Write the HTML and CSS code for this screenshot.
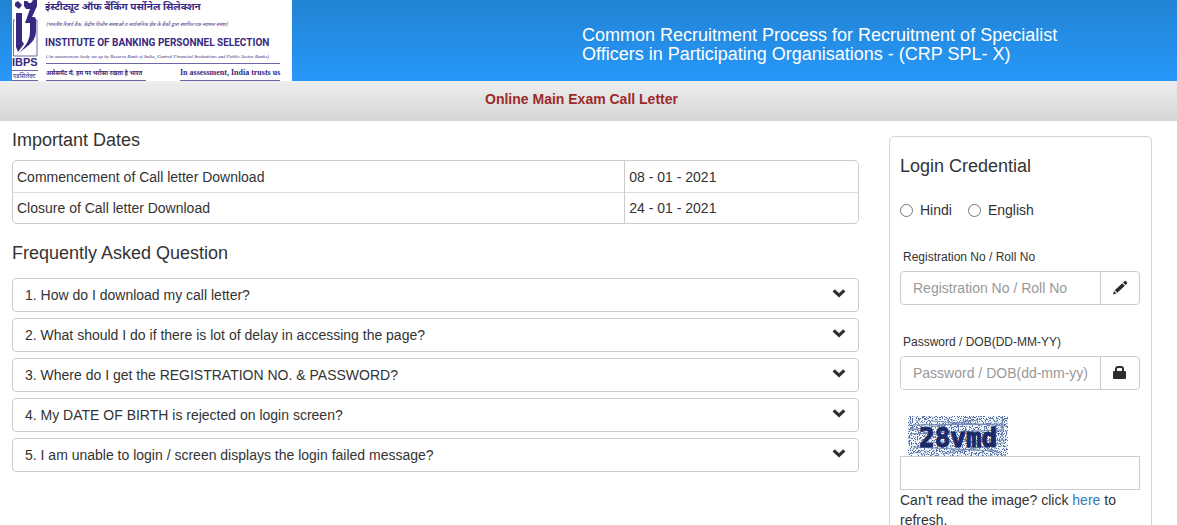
FILE: index.html
```html
<!DOCTYPE html>
<html lang="en">
<head>
<meta charset="utf-8">
<title>Online Main Exam Call Letter</title>
<link rel="stylesheet" href="styles.css">
</head>
<body>
<svg class="sprite" aria-hidden="true">
  <symbol id="chevron" viewBox="0 0 14 10"><path d="M0.6 3.4 2.8 1.2 7 5.2 11.2 1.2 13.4 3.4 7 9.4Z"/></symbol>
</svg>
<header class="banner">
  <svg class="logo" width="280" height="81" viewBox="0 0 280 81" role="img" aria-label="Institute of Banking Personnel Selection">
    <rect width="280" height="81" fill="#fff"/>
    <path d="M3 20H1.500V56H25V20H23" fill="none" stroke="#6d66a8"/>
    <g fill="#37297f">
      <path d="M3 3 6 1 10 5 7 9 3 6Z"/>
      <path d="M4 13H10V41L12 44 6 52 4 47Z"/>
      <path d="M12 1H15L17 3H19L21 0H25V6L20 17H22Q24 17 24 21V31Q24 39 17 45L7 53Q15 45 17 38Q18 35 18 31V23H13L18 9H14L12 6Z"/>
    </g>
    <path d="M0 70.500H26M0 80.500H26M34 63.500H268M34 80.500H134M168 80.500H268" stroke="#6d66a8"/>
    <g class="logo-text">
      <text class="ibps" x="0" y="66">IBPS</text>
      <text class="micro" x="1" y="78">एडसिलेक्ट</text>
      <text class="hindi-title" x="33" y="10">इंस्टीट्यूट ऑफ बैंकिंग पर्सोनेल सिलेक्शन</text>
      <text class="hindi-sub" x="34" y="26">(भारतीय रिज़र्व बैंक, केंद्रीय वित्तीय संस्थाओं व सार्वजनिक क्षेत्र के बैंकों द्वारा स्थापित एक स्वायत्त संस्था)</text>
      <text class="name" x="33" y="46">INSTITUTE OF BANKING PERSONNEL SELECTION</text>
      <text class="sub" x="34" y="58">(An autonomous body set up by Reserve Bank of India, Central Financial Institutions and Public Sector Banks)</text>
      <text class="hindi-tag" x="34" y="75">असेसमेंट में, हम पर भरोसा रखता है भारत</text>
      <text class="tag" x="168" y="75">In assessment, India trusts us</text>
    </g>
  </svg>
  <h1 class="banner-title">Common Recruitment Process for Recruitment of Specialist Officers in Participating Organisations - (CRP SPL- X)</h1>
</header>
<div class="subtitle">Online Main Exam Call Letter</div>

<div class="page">
  <main>
    <h2 class="heading">Important Dates</h2>
    <div class="dates">
      <table>
        <tr><td class="event">Commencement of Call letter Download</td><td>08 - 01 - 2021</td></tr>
        <tr><td class="event">Closure of Call letter Download</td><td>24 - 01 - 2021</td></tr>
      </table>
    </div>
    <h2 class="heading">Frequently Asked Question</h2>
    <div class="faq">
      <button type="button" class="question">1. How do I download my call letter?<svg class="chevron"><use href="#chevron"/></svg></button>
      <button type="button" class="question">2. What should I do if there is lot of delay in accessing the page?<svg class="chevron"><use href="#chevron"/></svg></button>
      <button type="button" class="question">3. Where do I get the REGISTRATION NO. &amp; PASSWORD?<svg class="chevron"><use href="#chevron"/></svg></button>
      <button type="button" class="question">4. My DATE OF BIRTH is rejected on login screen?<svg class="chevron"><use href="#chevron"/></svg></button>
      <button type="button" class="question">5. I am unable to login / screen displays the login failed message?<svg class="chevron"><use href="#chevron"/></svg></button>
    </div>
  </main>

  <form class="login">
    <h2 class="heading">Login Credential</h2>
    <div class="languages">
      <label class="language"><input type="radio" name="lang" value="hi">Hindi</label>
      <label class="language"><input type="radio" name="lang" value="en">English</label>
    </div>
    <div class="field">
      <label class="field-label" for="reg">Registration No / Roll No</label>
      <div class="input-group">
        <input class="input" id="reg" type="text" placeholder="Registration No / Roll No">
        <span class="addon"><svg width="16" height="16" viewBox="0 0 16 16"><path d="M1 14.500 2 11 4.500 13.500ZM2.800 10.200 10.200 3.200 12.800 5.800 5.400 12.800ZM11 2.500 12.700 1Q13.300.6 14 1.200L14.900 2.200Q15.400 2.800 15 3.400L13.500 5Z"/></svg></span>
      </div>
    </div>
    <div class="field">
      <label class="field-label" for="pwd">Password / DOB(DD-MM-YY)</label>
      <div class="input-group">
        <input class="input" id="pwd" type="password" placeholder="Password / DOB(dd-mm-yy)">
        <span class="addon"><svg width="16" height="16" viewBox="0 0 16 16"><path fill-rule="evenodd" d="M3 6V4Q3 1 6 1H9Q12 1 12 4V6H13Q14 6 14 7V13Q14 14 13 14H2Q1 14 1 13V7Q1 6 2 6ZM5 6H10V4Q10 3 9 3H6Q5 3 5 4Z"/></svg></span>
      </div>
    </div>
    <svg class="captcha" width="100" height="40" viewBox="0 0 100 40" role="img" aria-label="Verification image">
      <filter id="grain" x="0" y="0" width="100%" height="100%" color-interpolation-filters="sRGB">
        <feTurbulence type="fractalNoise" baseFrequency="0.85" numOctaves="2" seed="6"/>
        <feColorMatrix values="0 0 0 0 0.34  0 0 0 0 0.44  0 0 0 0 0.64  14 0 0 0 -7.2"/>
      </filter>
      <rect width="100" height="40" fill="#f1f8fd"/>
      <rect width="100" height="40" filter="url(#grain)"/>
      <path d="M2 14 70 4M5 9 96 8M2 18 94 14M24 5 98 10M5 31 90 35M12 27 98 24M30 14 92 37M2 12 40 22M94 3V21M35 38 95 27" fill="none" stroke="#7388b4"/>
      <text class="captcha-text" x="11" y="31">28vmd</text>
    </svg>
    <input class="captcha-input" type="text" aria-label="Enter the characters shown in the image">
    <p class="hint">Can't read the image? click <a href="#">here</a> to refresh.</p>
  </form>
</div>
</body>
</html>
```
FILE: styles.css
```css
* { box-sizing: border-box; }

body {
  margin: 0;
  color: #333;
  background: #fff;
  font: 14px/20px "Liberation Sans", Arial, sans-serif;
}

.sprite { display: none; }

.banner {
  display: grid;
  grid-template-columns: 1fr 1fr;
  padding: 0 25px 0 12px;
  background: linear-gradient(#2083d2, #2898fb);
}

.logo { display: block; }

.logo-text { fill: #37297f; }

.logo-text text { font-family: "Noto Sans Devanagari", "Noto Sans", sans-serif; }
.logo-text .ibps { font: bold 11px "Liberation Sans", sans-serif; }
.logo-text .micro { font-size: 6px; }
.logo-text .hindi-title { font-size: 10px; font-weight: bold; }
.logo-text .hindi-sub { font-size: 5px; font-style: italic; }
.logo-text .name { font: bold 10px Roboto, "Liberation Sans", sans-serif; }
.logo-text .sub { font: italic 5px "Liberation Serif", serif; }
.logo-text .hindi-tag { font-size: 6px; font-weight: bold; }
.logo-text .tag { font: bold 8px "Liberation Serif", serif; }

.banner-title {
  max-width: 500px;
  margin: 26px 0 0;
  color: #fff;
  font-size: 18px;
  font-weight: normal;
  line-height: 19px;
}

.subtitle {
  height: 40px;
  padding: 8px 14px 12px 0;
  background: linear-gradient(#eee, #d5d5d5);
  color: #9c2a2c;
  font-weight: bold;
  text-align: center;
}

.page {
  display: grid;
  grid-template-columns: minmax(0, 1fr) 263px;
  gap: 30px;
  align-items: start;
  padding: 0 25px 0 12px;
}

.heading {
  margin: 0;
  font-size: 18px;
  font-weight: normal;
  line-height: 20px;
}

main { padding-top: 9px; }

.dates {
  margin: 10px 0 19px;
  border: 1px solid #ccc;
  border-radius: 5px;
}

table {
  width: 100%;
  border-collapse: collapse;
}

td { padding: 6px 4px 5px; }
.event { width: 72.4%; border-right: 1px solid #ccc; }
tr + tr td { padding-top: 5px; border-top: 1px solid #ddd; }

.faq {
  display: grid;
  gap: 6px;
  margin-top: 15px;
}

.question {
  display: flex;
  justify-content: space-between;
  padding: 6px 12px;
  border: 1px solid #ccc;
  border-radius: 4px;
  background: #fff;
  color: #333;
  font: inherit;
  text-align: left;
}

.chevron {
  width: 14px;
  height: 10px;
  margin-top: 3px;
  fill: #2b2d33;
}

.login {
  margin: 15px 0;
  padding: 19px 11px 19px 10px;
  border: 1px solid #d4d4d4;
  border-radius: 5px;
}

.languages {
  display: flex;
  gap: 16px;
  margin: 24px 0 27px;
}

.language {
  display: flex;
  align-items: center;
  gap: 7px;
}

.language input { width: 13px; height: 13px; margin: 0; }

.field { margin-bottom: 27px; }
.field:has(+ .captcha) { margin-bottom: 26px; }

.field-label {
  display: block;
  margin-bottom: 4px;
  padding-left: 3px;
  font-size: 12px;
  line-height: 20px;
}

.input-group {
  display: flex;
  border: 1px solid #ccc;
  border-radius: 4px;
}

.input {
  flex: 1;
  min-width: 0;
  height: 32px;
  padding: 6px 12px;
  border: 0;
  border-radius: 4px;
  background: #fff;
  font: inherit;
}

.input::placeholder { color: #999; }

.addon {
  display: flex;
  align-items: center;
  justify-content: center;
  width: 39px;
  border-left: 1px solid #ccc;
  fill: #2b2d33;
}

.captcha {
  display: block;
  margin-left: 8px;
}

.captcha-text {
  fill: #1d2a68;
  stroke: #1d2a68;
  font: bold 26px "DejaVu Sans Mono", monospace;
}

.captcha-input {
  display: block;
  width: 100%;
  height: 34px;
  padding: 6px 12px;
  border: 1px solid #ccc;
  font: inherit;
}

.hint { margin: 0; }
.hint a { color: #337ab7; text-decoration: none; }
```
